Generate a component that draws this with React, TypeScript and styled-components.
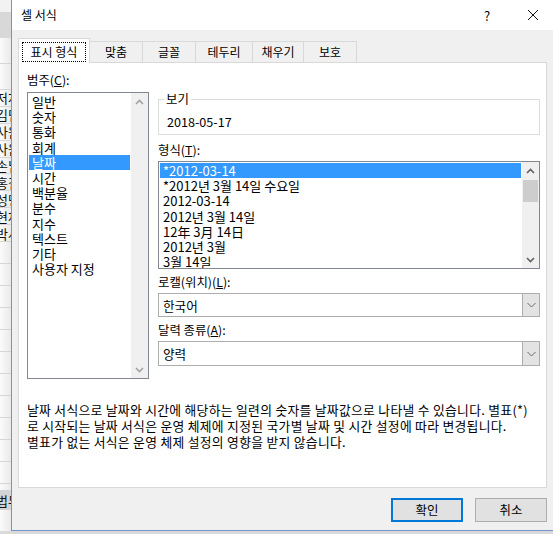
import React from "react";
import styled, { createGlobalStyle } from "styled-components";

const GlobalStyle = createGlobalStyle`
  html, body {
    margin: 0;
    padding: 0;
    overflow: hidden;
    background: #dadada;
  }
  body {
    font-family: "Noto Sans CJK KR", "Noto Sans", sans-serif;
    font-size: 12px;
    color: #000;
  }
  * {
    box-sizing: border-box;
  }
`;

const sheetNames = ["저자", "김민", "사원", "사원", "손님", "홍길", "성명", "현재", "박사"];
const categories = [
  "일반",
  "숫자",
  "통화",
  "회계",
  "날짜",
  "시간",
  "백분율",
  "분수",
  "지수",
  "텍스트",
  "기타",
  "사용자 지정",
];
const formats = [
  "*2012-03-14",
  "*2012년 3월 14일 수요일",
  "2012-03-14",
  "2012년 3월 14일",
  "12年 3月 14日",
  "2012년 3월",
  "3월 14일",
];
const tabs = [
  { label: "맞춤", w: 54 },
  { label: "글꼴", w: 54 },
  { label: "테두리", w: 58 },
  { label: "채우기", w: 52 },
  { label: "보호", w: 54 },
];

const Chevron = ({ up, color }: { up?: boolean; color: string }) => (
  <svg width="9" height="6" viewBox="0 0 9 6">
    <polyline
      points={up ? "1,5 4.5,1.5 8,5" : "1,1 4.5,4.5 8,1"}
      fill="none"
      stroke={color}
      strokeWidth="1.6"
    />
  </svg>
);

const ComboChevron = () => (
  <svg width="9" height="6" viewBox="0 0 9 6">
    <polyline points="0.5,1 4.5,5 8.5,1" fill="none" stroke="#6a6a6a" strokeWidth="1" />
  </svg>
);

const App = () => {
  return (
    <Screen>
      <GlobalStyle />
      <Sheet>
        <SheetBand $h={12} $bg="#f2f2f2" />
        <SheetBand $h={26} $bg="#d8d8d8" />
        <SheetRow $h={26} />
        <SheetRow $h={26} />
        {sheetNames.map((n, i) => (
          <SheetRow key={i} $h={16.9}>
            <SheetText>{n}</SheetText>
          </SheetRow>
        ))}
        {Array.from({ length: 11 }).map((_, i) => (
          <SheetRow key={"e" + i} $h={22} />
        ))}
        <SheetBand $h={6} $bg="transparent" />
        <SheetTabBand>
          <SheetText>법무</SheetText>
        </SheetTabBand>
      </Sheet>

      <Dialog>
        <TitleBar>
          <Title>셀 서식</Title>
          <CaptionButton>?</CaptionButton>
          <CaptionButton>
            <svg width="12" height="12" viewBox="0 0 12 12">
              <path d="M1 1 L11 11 M11 1 L1 11" stroke="#111" strokeWidth="1" />
            </svg>
          </CaptionButton>
        </TitleBar>

        <Body>
          <TabStrip>
            <ActiveTab>
              <FocusBox>표시 형식</FocusBox>
            </ActiveTab>
            {tabs.map((t) => (
              <Tab key={t.label} $w={t.w}>
                {t.label}
              </Tab>
            ))}
          </TabStrip>

          <Panel>
            <Top>
              <LeftCol>
                <FieldLabel>
                  범주(<u>C</u>):
                </FieldLabel>
                <CategoryBox>
                  <ItemList>
                    {categories.map((c) => (
                      <Item key={c} $sel={c === "날짜"}>
                        {c}
                      </Item>
                    ))}
                  </ItemList>
                  <ScrollBar>
                    <ScrollArrow>
                      <Chevron up color="#a3a3a3" />
                    </ScrollArrow>
                    <ScrollTrack />
                    <ScrollArrow>
                      <Chevron color="#a3a3a3" />
                    </ScrollArrow>
                  </ScrollBar>
                </CategoryBox>
              </LeftCol>

              <RightCol>
                <Preview>
                  <Legend>보기</Legend>
                  <PreviewValue>2018-05-17</PreviewValue>
                </Preview>

                <FieldLabel $mt={7}>
                  형식(<u>T</u>):
                </FieldLabel>
                <FormatBox>
                  <ItemList>
                    {formats.map((f, i) => (
                      <Item key={f} $sel={i === 0}>
                        {f}
                      </Item>
                    ))}
                  </ItemList>
                  <ScrollBar>
                    <ScrollArrow>
                      <Chevron up color="#606060" />
                    </ScrollArrow>
                    <ScrollTrack>
                      <Thumb />
                    </ScrollTrack>
                    <ScrollArrow>
                      <Chevron color="#606060" />
                    </ScrollArrow>
                  </ScrollBar>
                </FormatBox>

                <FieldLabel $mt={5}>
                  로캘(위치)(<u>L</u>):
                </FieldLabel>
                <Combo $h={24}>
                  <ComboText>한국어</ComboText>
                  <ComboButton>
                    <ComboChevron />
                  </ComboButton>
                </Combo>

                <FieldLabel $mt={5}>
                  달력 종류(<u>A</u>):
                </FieldLabel>
                <Combo $h={25}>
                  <ComboText>양력</ComboText>
                  <ComboButton>
                    <ComboChevron />
                  </ComboButton>
                </Combo>
              </RightCol>
            </Top>

            <Description>
              <div>
                날짜 서식으로 날짜와 시간에 해당하는 일련의 숫자를 날짜값으로 나타낼 수 있습니다. 별표(*)
              </div>
              <div>로 시작되는 날짜 서식은 운영 체제에 지정된 국가별 날짜 및 시간 설정에 따라 변경됩니다.</div>
              <div>별표가 없는 서식은 운영 체제 설정의 영향을 받지 않습니다.</div>
            </Description>
          </Panel>

          <Footer>
            <DialogButton $primary>확인</DialogButton>
            <DialogButton>취소</DialogButton>
          </Footer>
        </Body>
      </Dialog>
    </Screen>
  );
};

export default App;

const Screen = styled.div`
  width: 553px;
  height: 534px;
  display: flex;
  overflow: hidden;
  background: #dadada;
`;

const Sheet = styled.div`
  width: 11px;
  flex-shrink: 0;
  height: 531px;
  display: flex;
  flex-direction: column;
  overflow: hidden;
  background: linear-gradient(to right, #fbfbfb, #e9e9e9);
`;

const SheetBand = styled.div<{ $h: number; $bg: string }>`
  height: ${(p) => p.$h}px;
  flex-shrink: 0;
  background: ${(p) => p.$bg};
`;

const SheetRow = styled.div<{ $h: number }>`
  height: ${(p) => p.$h}px;
  flex-shrink: 0;
  border-bottom: 1px solid #d6d6d6;
  display: flex;
  align-items: center;
  overflow: hidden;
`;

const SheetText = styled.span`
  margin-left: -4px;
  font-size: 13px;
  line-height: 15px;
  white-space: nowrap;
  color: #111;
`;

const SheetTabBand = styled.div`
  height: 20px;
  flex-shrink: 0;
  background: #d4d4d4;
  display: flex;
  align-items: center;
  overflow: hidden;
`;

const Dialog = styled.div`
  width: 545px;
  flex-shrink: 0;
  height: 531px;
  border-left: 1px solid #7195cc;
  border-bottom: 1px solid #7195cc;
  background: #f0f0f0;
  display: flex;
  flex-direction: column;
`;

const TitleBar = styled.div`
  height: 30px;
  flex-shrink: 0;
  background: #fff;
  display: flex;
  align-items: center;
`;

const Title = styled.div`
  flex: 1;
  padding-left: 9px;
  line-height: 16px;
`;

const CaptionButton = styled.div`
  width: 46px;
  height: 30px;
  display: flex;
  align-items: center;
  justify-content: center;
  font-size: 13px;
`;

const Body = styled.div`
  padding: 8px 0 0 6px;
  display: flex;
  flex-direction: column;
`;

const TabStrip = styled.div`
  height: 24px;
  display: flex;
  align-items: flex-end;
`;

const ActiveTab = styled.div`
  position: relative;
  z-index: 1;
  width: 72px;
  height: 25px;
  margin-bottom: -1px;
  padding: 3px 3px 1px 3px;
  background: #fff;
  border: 1px solid #d9d9d9;
  border-bottom: none;
  display: flex;
`;

const FocusBox = styled.div`
  flex: 1;
  border: 1px dotted #000;
  display: flex;
  align-items: center;
  justify-content: center;
  line-height: 16px;
`;

const Tab = styled.div<{ $w: number }>`
  width: ${(p) => p.$w}px;
  height: 21px;
  margin-left: -1px;
  background: #f0f0f0;
  border: 1px solid #d9d9d9;
  border-bottom: none;
  display: flex;
  align-items: center;
  justify-content: center;
  line-height: 16px;
`;

const Panel = styled.div`
  width: 529px;
  height: 426px;
  background: #fff;
  border: 1px solid #d9d9d9;
  padding: 9px 6px 0 8px;
`;

const Top = styled.div`
  display: flex;
  gap: 9px;
  align-items: flex-start;
`;

const LeftCol = styled.div`
  width: 122px;
  flex-shrink: 0;
`;

const RightCol = styled.div`
  width: 382px;
  padding-top: 20px;
`;

const FieldLabel = styled.div<{ $mt?: number }>`
  height: 16px;
  line-height: 16px;
  font-size: 12.4px;
  margin-top: ${(p) => p.$mt ?? 0}px;
  white-space: nowrap;
  u {
    text-decoration: underline;
    text-underline-offset: 1px;
  }
`;

const CategoryBox = styled.div`
  margin-top: 4px;
  height: 287px;
  border: 1px solid #828790;
  display: flex;
`;

const FormatBox = styled.div`
  margin-top: 3px;
  height: 108px;
  border: 1px solid #828790;
  display: flex;
`;

const ItemList = styled.div`
  flex: 1;
  padding: 1px;
  overflow: hidden;
`;

const Item = styled.div<{ $sel?: boolean }>`
  height: 15.2px;
  line-height: 15px;
  font-size: 13px;
  padding-left: 3px;
  white-space: nowrap;
  background: ${(p) => (p.$sel ? "#3399ff" : "transparent")};
  color: ${(p) => (p.$sel ? "#fff" : "#000")};
`;

const ScrollBar = styled.div`
  width: 17px;
  flex-shrink: 0;
  background: #f0f0f0;
  display: flex;
  flex-direction: column;
`;

const ScrollArrow = styled.div`
  height: 17px;
  flex-shrink: 0;
  display: flex;
  align-items: center;
  justify-content: center;
`;

const ScrollTrack = styled.div`
  flex: 1;
  padding-top: 1px;
`;

const Thumb = styled.div`
  height: 22px;
  margin: 0 1px;
  background: #cdcdcd;
`;

const Preview = styled.fieldset`
  margin: 0;
  padding: 8px 6px 4px 7px;
  border: 1px solid #dcdcdc;
  min-width: 0;
`;

const Legend = styled.legend`
  padding: 0 2px;
  margin-left: -2px;
  line-height: 14px;
  font-size: 12.4px;
`;

const PreviewValue = styled.div`
  line-height: 16px;
  font-size: 12.6px;
  padding-left: 1px;
`;

const Combo = styled.div<{ $h: number }>`
  margin-top: 3px;
  height: ${(p) => p.$h}px;
  border: 1px solid #adadad;
  display: flex;
  background: #fff;
`;

const ComboText = styled.div`
  flex: 1;
  padding-left: 4px;
  font-size: 12.6px;
  display: flex;
  align-items: center;
`;

const ComboButton = styled.div`
  width: 17px;
  background: #e3e3e3;
  border-left: 1px solid #adadad;
  display: flex;
  align-items: center;
  justify-content: center;
`;

const Description = styled.div`
  margin-top: 23px;
  line-height: 16px;
  font-size: 12.8px;
  letter-spacing: 0.3px;
  white-space: nowrap;
`;

const Footer = styled.div`
  width: 529px;
  display: flex;
  justify-content: flex-end;
  gap: 12px;
  padding-top: 10px;
`;

const DialogButton = styled.div<{ $primary?: boolean }>`
  width: 72px;
  height: 24px;
  background: #e1e1e1;
  border: ${(p) => (p.$primary ? "2px solid #0078d7" : "1px solid #adadad")};
  display: flex;
  align-items: center;
  justify-content: center;
  line-height: 16px;
  font-size: 12.4px;
`;
